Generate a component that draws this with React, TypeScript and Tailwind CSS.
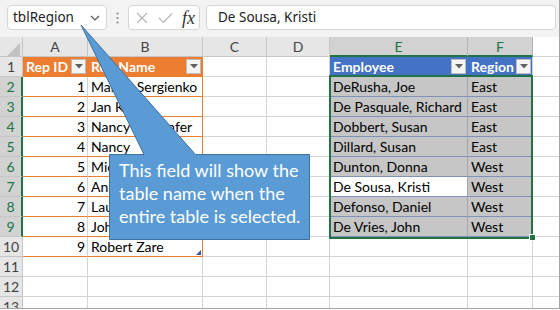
import React from "react";

const leftRows: [number, string][] = [
  [1, "Mariya Sergienko"],
  [2, "Jan Kotas"],
  [3, "Nancy Freehafer"],
  [4, "Nancy"],
  [5, "Michael Neipper"],
  [6, "Anne Hellung"],
  [7, "Laura Giussani"],
  [8, "John Edwards"],
  [9, "Robert Zare"],
];

const rightRows: [string, string][] = [
  ["DeRusha, Joe", "East"],
  ["De Pasquale, Richard", "East"],
  ["Dobbert, Susan", "East"],
  ["Dillard, Susan", "East"],
  ["Dunton, Donna", "West"],
  ["De Sousa, Kristi", "West"],
  ["Defonso, Daniel", "West"],
  ["De Vries, John", "West"],
];

function Drop() {
  return (
    <span className="ml-auto mr-[1px] w-[15px] h-[15px] shrink-0 bg-[#f4f4f4] border border-[#bdbdbd] flex items-center justify-center">
      <svg width="8" height="5" viewBox="0 0 8 5">
        <path d="M0 0H8L4 4.5Z" fill="#5f5f5f" />
      </svg>
    </span>
  );
}

const base = "h-[20px] flex items-center overflow-hidden whitespace-nowrap text-[14px] text-black";

export default function App() {
  const rows: React.ReactNode[] = [];
  rows.push(
    <div key="corner" className="relative h-[20px] bg-[#e6e6e6] border-r border-b border-[#c6c6c6]">
      <svg className="absolute left-[7px] top-[6px]" width="13" height="13" viewBox="0 0 13 13">
        <path d="M13 0V13H0Z" fill="#c3c3c3" />
      </svg>
    </div>
  );
  ["A", "B", "C", "D"].forEach((l) =>
    rows.push(
      <div key={"h" + l} className="h-[20px] flex items-center justify-center bg-[#e6e6e6] border-r border-b border-[#c6c6c6] text-[14px] text-[#444]">
        {l}
      </div>
    )
  );
  ["E", "F"].forEach((l) =>
    rows.push(
      <div key={"h" + l} className="h-[20px] flex items-center justify-center bg-[#d2d2d2] border-r border-[#b4b4b4] border-b-2 border-b-[#217346] text-[14px] text-[#217346]">
        {l}
      </div>
    )
  );
  rows.push(<div key="hG" className="h-[20px] bg-white border-b border-[#d4d4d4]" />);

  for (let r = 1; r <= 13; r++) {
    const sel = r >= 2 && r <= 9;
    rows.push(
      <div
        key={"r" + r}
        className={
          sel
            ? "h-[20px] flex items-center justify-center bg-[#d2d2d2] border-b border-[#c6c6c6] border-r-2 border-r-[#217346] text-[14px] text-[#217346]"
            : "h-[20px] flex items-center justify-center bg-[#e6e6e6] border-r border-b border-[#c6c6c6] text-[14px] text-[#444]"
        }
      >
        {r}
      </div>
    );
    if (r === 1) {
      rows.push(
        <div key="a1" className={base + " bg-[#ed7d31] border-r border-b border-[#ed7d31] pl-[3px] font-bold"}>
          <span className="text-white">Rep ID</span>
          <Drop />
        </div>
      );
      rows.push(
        <div key="b1" className={base + " bg-[#ed7d31] border-r border-b border-[#ed7d31] pl-[3px] font-bold"}>
          <span className="text-white">Rep Name</span>
          <Drop />
        </div>
      );
    } else if (r <= 10) {
      const [n, name] = leftRows[r - 2];
      rows.push(
        <div key={"a" + r} className={base + " justify-end pr-[2px] border-r border-r-[#d4d4d4] border-b border-b-[#ed7d31]"}>
          {n}
        </div>
      );
      rows.push(
        <div key={"b" + r} className={base + " relative pl-[3px] border-r border-b border-[#ed7d31]"}>
          {name}
          {r === 10 && (
            <svg className="absolute right-[1px] bottom-[1px]" width="5" height="5" viewBox="0 0 5 5">
              <path d="M5 0V5H0Z" fill="#2f55a4" />
            </svg>
          )}
        </div>
      );
    } else {
      rows.push(<div key={"a" + r} className="h-[20px] border-r border-b border-[#d4d4d4]" />);
      rows.push(<div key={"b" + r} className="h-[20px] border-r border-b border-[#d4d4d4]" />);
    }
    rows.push(<div key={"c" + r} className="h-[20px] border-r border-b border-[#d4d4d4]" />);
    rows.push(<div key={"d" + r} className="h-[20px] border-r border-b border-[#d4d4d4]" />);
    if (r === 1) {
      rows.push(
        <div key="e1" className={base + " bg-[#4472c4] border-r border-b border-[#4472c4] pl-[3px] font-bold"}>
          <span className="text-white">Employee</span>
          <Drop />
        </div>
      );
      rows.push(
        <div key="f1" className={base + " bg-[#4472c4] border-r border-r-[#c9d3e6] border-b border-b-[#4472c4] pl-[3px] font-bold"}>
          <span className="text-white">Region</span>
          <Drop />
        </div>
      );
    } else if (r <= 9) {
      const [emp, reg] = rightRows[r - 2];
      const active = r === 7;
      rows.push(
        <div
          key={"e" + r}
          className={
            active
              ? base + " pl-[3px] bg-white border-r border-r-[#a6a6a6] border-b border-b-[#7f93b8]"
              : base + " pl-[3px] bg-[#c6c6c6] border-r border-r-[#a6a6a6] border-b border-b-[#7f93b8]"
          }
        >
          {emp}
        </div>
      );
      rows.push(
        <div key={"f" + r} className={base + " pl-[3px] bg-[#c6c6c6] border-r border-r-[#a6a6a6] border-b border-b-[#7f93b8]"}>
          {reg}
        </div>
      );
    } else {
      rows.push(<div key={"e" + r} className="h-[20px] border-r border-b border-[#d4d4d4]" />);
      rows.push(<div key={"f" + r} className="h-[20px] border-r border-b border-[#d4d4d4]" />);
    }
    rows.push(<div key={"g" + r} className="h-[20px] border-b border-[#d4d4d4]" />);
  }

  return (
    <div className="w-[560px] h-[310px] bg-white font-['Lato',sans-serif]">
      <div className="relative w-[560px] h-[309px] overflow-hidden border-r border-b border-[#a6a6a6]">
        <div className="h-[37px] bg-[#f3f3f3] flex items-start pt-[5px] pl-[7px] pr-[3px]">
          <div className="w-[100px] h-[25px] bg-white border border-[#d6d6d6] rounded-[4px] flex items-center pl-[5px] pr-[6px] font-['Noto_Sans',sans-serif] text-[13.5px] text-[#222]">
            <span>tblRegion</span>
            <svg className="ml-auto" width="10" height="6" viewBox="0 0 10 6">
              <path d="M1 1L5 5L9 1" fill="none" stroke="#555" strokeWidth="1.2" />
            </svg>
          </div>
          <div className="w-[21px] h-[25px] flex items-center justify-center">
            <svg width="3" height="12" viewBox="0 0 3 12">
              <circle cx="1.5" cy="1.5" r="1.1" fill="#8a8a8a" />
              <circle cx="1.5" cy="6" r="1.1" fill="#8a8a8a" />
              <circle cx="1.5" cy="10.5" r="1.1" fill="#8a8a8a" />
            </svg>
          </div>
          <div className="w-[72px] h-[25px] bg-white border border-[#d6d6d6] rounded-[4px] flex items-center pl-[7px] pr-[3px]">
            <svg width="12" height="12" viewBox="0 0 12 12">
              <path d="M1 1L11 11M11 1L1 11" stroke="#b4b4b4" strokeWidth="1.1" fill="none" />
            </svg>
            <svg className="ml-[10px]" width="15" height="12" viewBox="0 0 15 12">
              <path d="M1 6L5.5 10.5L14 1.5" stroke="#b4b4b4" strokeWidth="1.1" fill="none" />
            </svg>
            <span className="ml-auto mr-[1px] font-['Liberation_Serif',serif] italic text-[18px] leading-none text-[#333]">fx</span>
          </div>
          <div className="ml-[6px] flex-1 h-[25px] bg-white border border-[#d6d6d6] rounded-[4px] flex items-center pl-[11px] font-['Noto_Sans',sans-serif] text-[13.5px] text-[#222]">
            De Sousa, Kristi
          </div>
        </div>

        <div className="grid grid-cols-[23px_65px_115px_64px_63px_138px_65px_1fr] auto-rows-[20px]">
          {rows}
        </div>

        <div className="absolute left-[329px] top-[75px] w-[204px] h-[164px] border-2 border-[#217346] pointer-events-none" />
        <div className="absolute left-[529px] top-[234px] w-[7px] h-[7px] bg-[#217346] border border-white" />

        <svg className="absolute left-0 top-0" width="560" height="310" viewBox="0 0 560 310">
          <path
            d="M109.5 154.5H144L81 25L195.5 154.5H309.5V239.5H109.5Z"
            fill="#5b9bd5"
            stroke="#41719c"
            strokeWidth="1"
          />
        </svg>
        <div className="absolute left-[119px] top-[159px] w-[190px] font-['Lato',sans-serif] text-[18px] leading-[23px] text-white">
          <div>This field will show the</div>
          <div>table name when the</div>
          <div>entire table is selected.</div>
        </div>
      </div>
    </div>
  );
}
